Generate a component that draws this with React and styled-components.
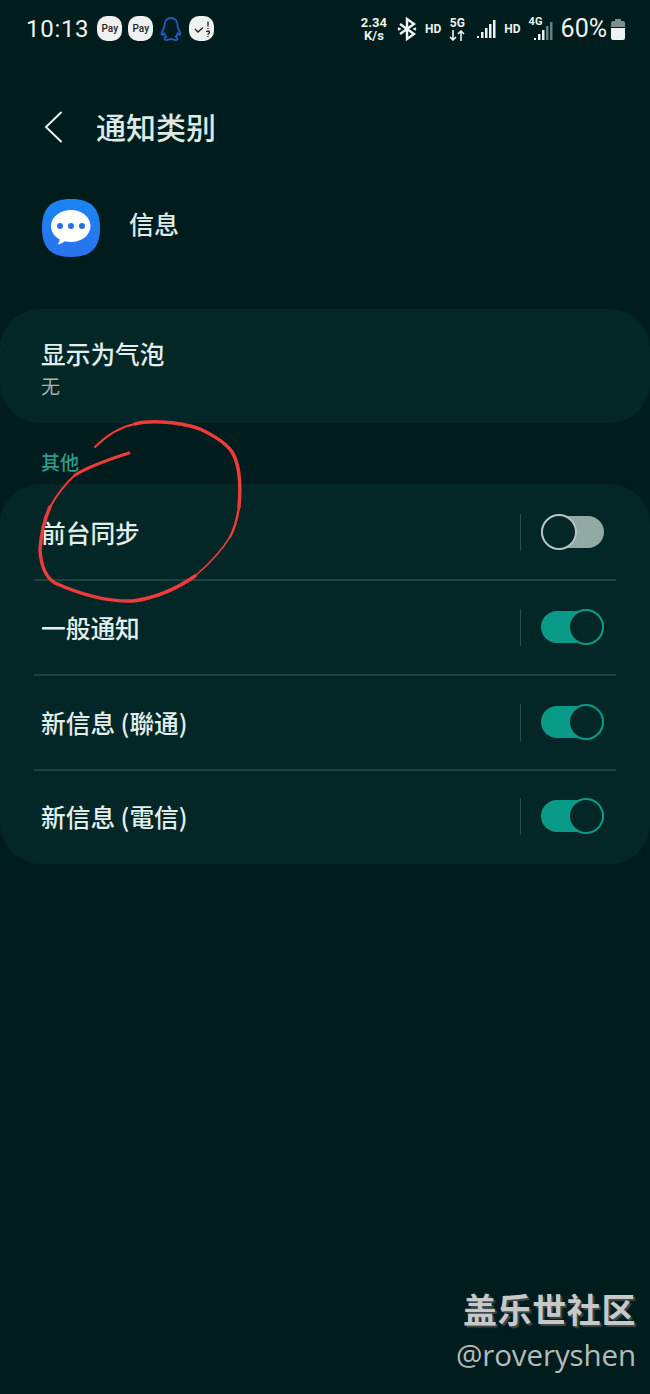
import React from "react";
import styled, { createGlobalStyle } from "styled-components";

const Global = createGlobalStyle`
  html, body { margin: 0; padding: 0; background: #011c1c; }
  * { box-sizing: border-box; }
`;
const cjk = `"Noto Sans CJK SC", "Noto Sans", sans-serif`;
const Page = styled.div`
  position: relative; width: 650px; height: 1394px; overflow: hidden;
  background: #011c1c; font-family: ${cjk}; color: #e6f1ef;
`;
const StatusBar = styled.div`
  height: 57px; padding: 0 25px 0 26px; display: flex; align-items: center; justify-content: space-between;
  font-family: Roboto, sans-serif; color: #eef3f2;
`;
const StatusGroup = styled.div`display: flex; align-items: center; gap: ${p => p.$gap || 6}px;`;
const Clock = styled.span`font-size: 24px; line-height: 1; font-weight: 400; letter-spacing: .7px; margin-right: 2px;`;
const Squircle = styled.span`
  width: 25px; height: 25px; border-radius: 10px; background: #eef1f0; color: #222;
  display: flex; align-items: center; justify-content: center; font: 500 10px Roboto, sans-serif;
`;
const Tiny = styled.span`
  display: flex; flex-direction: column; align-items: center; font: 700 ${p => p.$s || 12}px/${p => p.$l || 12}px Roboto, sans-serif;
  margin-right: ${p => p.$mr || 0}px;
`;
const Hd = styled.span`font: 700 12px Roboto, sans-serif;`;
const SignalWrap = styled.span`position: relative; width: 24px; height: 26px; display: block;`;
const SignalLabel = styled(Tiny)`position: absolute; left: 0; top: 0;`;
const SignalBars = styled.span`position: absolute; left: 4px; top: 5px;`;
const Percent = styled.span`font: 400 25px/1 Roboto, sans-serif; margin-right: -4px;`;
const Header = styled.header`
  height: 76px; margin-top: 32px; padding-left: 43px; display: flex; align-items: center; gap: 33px;
`;
const Title = styled.h1`margin: 0 0 2px; font-size: 30px; line-height: 1; font-weight: 500; color: #dcebe8;`;
const AppRow = styled.div`
  margin-top: 33px; height: 60px; padding-left: 42px; display: flex; align-items: center; gap: 29px;
`;
const AppName = styled.span`font-size: 25px; font-weight: 500; color: #dcebe8; margin-bottom: 10px;`;
const Card = styled.section`background: #032727; border-radius: 40px; margin-top: ${p => p.$mt}px;`;
const BubbleCard = styled(Card)`height: 114px; padding: 28px 41px 0;`;
const ListCard = styled(Card)`padding-top: 2px;`;
const RowTitle = styled.div`font-size: 24.700px; line-height: 32px; font-weight: 500; color: #e2efec;`;
const Sub = styled.div`font-size: 19px; line-height: 24px; margin-top: 5px; color: #a3b5b2;`;
const Section = styled.div`
  margin: 25px 0 0 41px; height: 28px; font-size: 19px; line-height: 28px; font-weight: 500; color: #2d9c8a;
`;
const Row = styled.div`
  height: ${p => p.$last ? 93 : 95}px; margin: 0 34px; padding: 0 12px 1px 7px; display: flex; align-items: center;
  border-bottom: 2px solid ${p => p.$last ? "transparent" : "#1c4241"};
`;
const Grow = styled.div`flex: 1;`;
const VLine = styled.div`width: 1px; height: 37px; background: #265050; margin-right: 20px;`;
const Toggle = styled.div`
  position: relative; width: 63px; height: 32px; border-radius: 16px; background: ${p => p.$on ? "#0a9a88" : "#93a9a6"};
`;
const Knob = styled.div`
  position: absolute; top: -2px; ${p => p.$on ? "right: 0" : "left: 0"}; width: 36px; height: 36px; border-radius: 50%;
  background: #032727; border: 2px solid ${p => p.$on ? "#0a9a88" : "#b3c5c2"};
`;
const Mark = styled.svg`position: absolute; left: 0; top: 400px; pointer-events: none;`;
const Watermark = styled.div`
  position: absolute; right: 14px; top: 1286px; text-align: right; color: #c8c8c8;
`;
const WmTitle = styled.div`
  font: 700 34px/46px ${cjk}; letter-spacing: .6px; text-shadow: 2px 2px 1px #3d4a4a;
`;
const WmUser = styled.div`font: 400 29.500px/40px "Open Sans", sans-serif; margin-top: 3px; color: #b4bcbb; letter-spacing: -.1px;`;

const Pay = () => <Squircle>Pay</Squircle>;
const Switch = ({ on }) => <Toggle $on={on}><Knob $on={on} /></Toggle>;

const Bars = ({ dim }) => (
  <svg width="20" height="20" viewBox="0 0 20 20" fill="#eef3f2">
    <rect x="1" y="17" width="2" height="2" />
    <rect x="5" y="13" width="2.500" height="6" />
    <rect x="9" y="9" width="2.500" height="10" />
    <rect x="13" y="5" width="2.500" height="14" opacity={dim ? .45 : 1} />
    <rect x="17" y="1" width="2.500" height="18" opacity={dim ? .45 : 1} />
  </svg>
);

const rows = [["前台同步", false], ["一般通知", true], ["新信息 (聯通)", true], ["新信息 (電信)", true]];

export default function App() {
  return (
    <Page>
      <Global />
      <StatusBar>
        <StatusGroup>
          <Clock>10:13</Clock>
          <Pay /><Pay />
          <svg width="24" height="26" viewBox="0 0 24 26" fill="none" stroke="#1c62c4" strokeWidth="1.800" strokeLinejoin="round">
            <path d="M12 2c-4.500 0-6.500 3.500-6.500 7.500 0 2-.5 3-2 5.500-1 1.800-1.200 3.500-.3 3.800.6.100 1.300-.6 2-1.600.3 1.500 1 2.800 2 3.800-1.500.6-2 1.500-1.500 2.300.7.800 3 .7 4.300.2.800-.3 1.200-.5 2-.5s1.200.2 2 .5c1.300.5 3.600.6 4.300-.2.500-.8 0-1.700-1.500-2.300 1-1 1.700-2.300 2-3.800.7 1 1.400 1.700 2 1.600.9-.3.7-2-.3-3.800-1.500-2.500-2-3.500-2-5.500C18.500 5.500 16.500 2 12 2z" />
          </svg>
          <Squircle>
            <svg width="20" height="20" viewBox="0 0 20 20" fill="none" stroke="#222" strokeWidth="1.300">
              <path d="M3 10l3 3 5-4.500" />
              <path d="M16 2.500v5M16 9v1" />
              <path d="M14.500 13c.3-1.500 3-1.300 3 .3 0 1.200-1.500 1.200-1.500 2.400M16 17v1" />
            </svg>
          </Squircle>
        </StatusGroup>
        <StatusGroup $gap={8}>
          <Tiny $s={13} $l={13} $mr={2}><span>2.34</span><span>K/s</span></Tiny>
          <svg width="20" height="24" viewBox="0 0 20 24" fill="none" stroke="#eef3f2" strokeWidth="2.400">
            <path d="M3 7l14 10-7 5V2l7 5L3 17" />
            <path d="M1 11l2 1-2 1M19 11l-2 1 2 1" strokeWidth="1.500" />
          </svg>
          <Hd>HD</Hd>
          <Tiny $s={12} $l={13} $mr={3}>
            <span>5G</span>
            <svg width="16" height="11" viewBox="0 0 16 11" fill="none" stroke="#eef3f2" strokeWidth="1.600">
              <path d="M4 0v10M1 7l3 3 3-3M12 11V1M9 4l3-3 3 3" />
            </svg>
          </Tiny>
          <Bars />
          <Hd>HD</Hd>
          <SignalWrap>
            <SignalLabel $s={11} $l={11}>4G</SignalLabel>
            <SignalBars><Bars dim /></SignalBars>
          </SignalWrap>
          <Percent>60%</Percent>
          <svg width="14" height="22" viewBox="0 0 14 22">
            <path d="M4 1h6v2h2a2 2 0 0 1 2 2v4H0V5a2 2 0 0 1 2-2h2z" fill="#7d8f8d" />
            <path d="M0 10h14v10a2 2 0 0 1-2 2H2a2 2 0 0 1-2-2z" fill="#eef3f2" />
          </svg>
        </StatusGroup>
      </StatusBar>
      <Header>
        <svg width="20" height="32" viewBox="0 0 20 32" fill="none" stroke="#e6f1ef" strokeWidth="2" strokeLinecap="round">
          <path d="M18 1.500L3 16l15 14.500" />
        </svg>
        <Title>通知类别</Title>
      </Header>
      <AppRow>
        <svg width="58" height="58" viewBox="0 0 58 58">
          <defs>
            <linearGradient id="b" x1="0" y1="0" x2="0" y2="1"><stop offset="0" stopColor="#1a85f5" /><stop offset="1" stopColor="#2a72ee" /></linearGradient>
          </defs>
          <path d="M29 0c20 0 29 9 29 29s-9 29-29 29S0 49 0 29 9 0 29 0z" fill="url(#b)" />
          <path d="M29 11c11 0 19.500 7 19.500 16S40 43 29 43c-2 0-4-.3-6-.7-2 1.500-4.500 3-7.500 3.200 1.200-1.200 2-3 2.200-5C12.500 37.500 9 33 9 27 9 18 18 11 29 11z" fill="#fff" />
          <circle cx="18" cy="27" r="3" fill="#2a6fe0" /><circle cx="29" cy="27" r="3" fill="#2a6fe0" /><circle cx="40" cy="27" r="3" fill="#2a6fe0" />
        </svg>
        <AppName>信息</AppName>
      </AppRow>
      <BubbleCard $mt={51}>
        <RowTitle>显示为气泡</RowTitle>
        <Sub>无</Sub>
      </BubbleCard>
      <Section>其他</Section>
      <ListCard $mt={8}>
        {rows.map(([t, on], i) => (
          <Row key={t} $last={i === rows.length - 1}>
            <RowTitle>{t}</RowTitle>
            <Grow />
            <VLine />
            <Switch on={on} />
          </Row>
        ))}
      </ListCard>
      <Mark width="260" height="220" viewBox="0 0 260 220" fill="none" stroke="#ee3b3b" strokeLinecap="round" strokeLinejoin="round">
        <path strokeWidth="2" d="M95 47C105 37 120 27 135 24" />
        <path strokeWidth="3.500" d="M135 24C145 21 175 20 200 29C215 36 226 43 232 52C240 65 241 85 239 107" />
        <path strokeWidth="2.500" d="M239 107C237 120 234 130 230 137" />
        <path strokeWidth="1.500" d="M230 137C222 150 208 165 195 176" />
        <path strokeWidth="3.500" d="M195 176C175 190 155 198 133 201C105 202 75 192 55 183C45 177 41 165 40 150C41 135 44 120 50 107" />
        <path strokeWidth="2" d="M50 107C58 93 66 83 75 75" />
        <path strokeWidth="3" d="M75 75C90 66 110 59 129 53" />
      </Mark>
      <Watermark>
        <WmTitle>盖乐世社区</WmTitle>
        <WmUser>@roveryshen</WmUser>
      </Watermark>
    </Page>
  );
}
